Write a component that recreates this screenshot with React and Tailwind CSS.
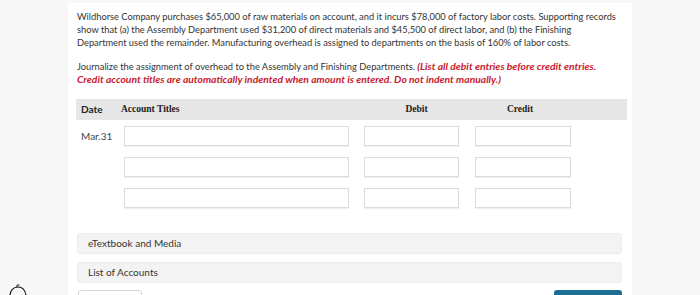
export default function App() {
  const rows = [0, 1, 2]

  return (
    <div className="w-[700px] h-[295px] bg-[#f7f7f7] overflow-hidden flex justify-center pt-[3px] relative font-['Lato','Open_Sans',sans-serif]">
      <div className="w-[564px] bg-white px-[9px] pt-[7px]">
        {/* Problem text */}
        <p className="text-[9.3px] leading-[13px] text-[#333] whitespace-nowrap">
          Wildhorse Company purchases $65,000 of raw materials on account, and it incurs $78,000 of factory labor costs. Supporting records
          <br />
          show that (a) the Assembly Department used $31,200 of direct materials and $45,500 of direct labor, and (b) the Finishing
          <br />
          Department used the remainder. Manufacturing overhead is assigned to departments on the basis of 160% of labor costs.
        </p>

        <p className="mt-[11px] text-[9.3px] leading-[13px] text-[#333] whitespace-nowrap">
          Journalize the assignment of overhead to the Assembly and Finishing Departments.{' '}
          <span className="text-[#c8202f] font-bold italic text-[10.3px]">(List all debit entries before credit entries.</span>
          <br />
          <span className="text-[#c8202f] font-bold italic text-[10.3px]">
            Credit account titles are automatically indented when amount is entered. Do not indent manually.)
          </span>
        </p>

        {/* Journal table */}
        <div className="mt-[13px] -ml-px w-[551px]">
          <div className="h-[21px] bg-[#e6e6e6] flex items-center text-[9.5px] font-bold text-[#222]">
            <div className="w-[45px] pl-[5px] text-[10px]">Date</div>
            <div className="w-[240px] font-['Liberation_Serif',serif]">Account Titles</div>
            <div className="w-[111px] text-center font-['Liberation_Serif',serif]">Debit</div>
            <div className="w-[96px] text-center font-['Liberation_Serif',serif]">Credit</div>
          </div>

          <div className="pt-[6px] flex flex-col gap-[11px]">
            {rows.map(i => (
              <div key={i} className="flex items-center h-[20px]">
                <div className="w-[48px] pl-[5px] text-[10px] text-[#444]">{i === 0 ? 'Mar.31' : ''}</div>
                <div className="w-[225px] h-[20px] border border-[#dcdcdc] shadow-[0_1px_1px_rgba(0,0,0,0.06)] bg-white" />
                <div className="ml-[15px] w-[95px] h-[20px] border border-[#dcdcdc] shadow-[0_1px_1px_rgba(0,0,0,0.06)] bg-white" />
                <div className="ml-[16px] w-[96px] h-[20px] border border-[#dcdcdc] shadow-[0_1px_1px_rgba(0,0,0,0.06)] bg-white" />
              </div>
            ))}
          </div>
        </div>

        {/* Resource bars */}
        <div className="mt-[25px] w-[545px] flex flex-col gap-[8px]">
          <div className="h-[21px] bg-[#f3f3f3] border border-[#ececec] rounded-[3px] flex items-center pl-[10px] text-[10px] text-[#333]">
            eTextbook and Media
          </div>
          <div className="h-[21px] bg-[#f3f3f3] border border-[#ececec] rounded-[3px] flex items-center pl-[10px] text-[10px] text-[#333]">
            List of Accounts
          </div>
        </div>

        {/* Bottom buttons (cut off) */}
        <div className="mt-[7px] w-[545px] flex justify-between">
          <div className="ml-px w-[64px] h-[12px] border border-[#d6d6d6] rounded-[3px] bg-white" />
          <div className="w-[68px] h-[12px] bg-[#1e6f96] rounded-[3px]" />
        </div>
      </div>

      {/* partial cursor scribble bottom-left */}
      <svg className="absolute left-[4px] top-[282px]" width="28" height="14" viewBox="0 0 28 14" fill="none">
        <path d="M6 14 C6 9 9 5 14 5 C18 5 21 8 22 13" stroke="#111" strokeWidth="1.1" strokeLinecap="round" />
        <path d="M13 5 C12 3.5 13 2.5 15 3" stroke="#111" strokeWidth="1" strokeLinecap="round" />
      </svg>
    </div>
  )
}
